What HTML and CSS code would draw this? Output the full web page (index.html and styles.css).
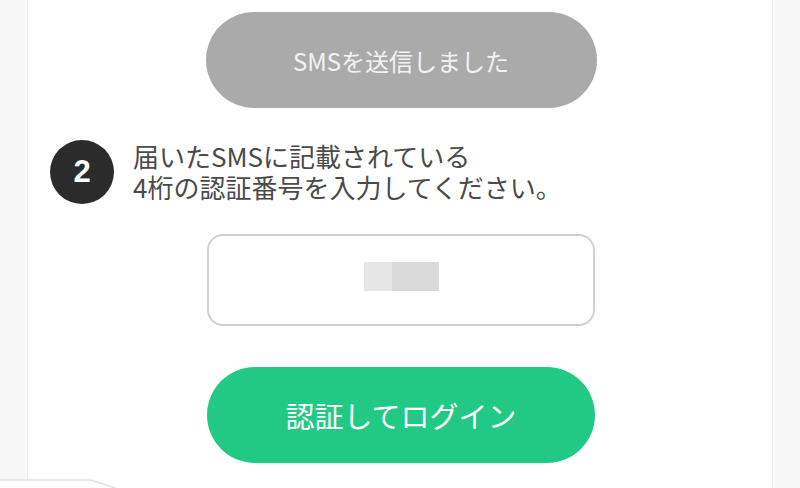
FILE: index.html
```html
<!DOCTYPE html>
<html lang="ja">
<head>
<meta charset="utf-8">
<link rel="stylesheet" href="styles.css">
</head>
<body>
<div class="page">
  <main class="card">
    <button class="btn btn-sent" type="button">SMSを送信しました</button>
    <div class="step">
      <div class="step-num">2</div>
      <p class="step-text">届いたSMSに記載されている<br>4桁の認証番号を入力してください。</p>
    </div>
    <div class="code-input">
      <span class="mask mask-a"></span><span class="mask mask-b"></span>
    </div>
    <button class="btn btn-login" type="button">認証してログイン</button>
  </main>
  <svg class="bubble" width="120" height="10" viewBox="0 0 120 10">
    <polygon points="-2,1 91,1 118,10 -2,10" fill="#ffffff" stroke="#e2e2e2" stroke-width="1.5"/>
  </svg>
</div>
</body>
</html>
```

FILE: styles.css
```css
* { box-sizing: border-box; }
html, body {
  margin: 0;
  padding: 0;
  height: 100%;
  background: #f7f7f7;
  font-family: "Noto Sans CJK JP", "Noto Sans", sans-serif;
}
.page {
  position: relative;
  height: 488px;
  overflow: hidden;
}
.card {
  margin: 0 27px 0 27px;
  height: 488px;
  background: #ffffff;
  border-left: 1px solid #ececec;
  border-right: 1px solid #ececec;
  display: flex;
  flex-direction: column;
  align-items: center;
  padding-top: 12px;
}
.btn {
  border: none;
  border-radius: 48px;
  font-family: inherit;
  color: #ffffff;
  display: flex;
  align-items: center;
  justify-content: center;
  padding: 0;
}
.btn-sent {
  width: 391px;
  height: 96px;
  background: #aaaaaa;
  color: #f2f2f2;
  font-size: 24px;
  margin-left: 2px;
}
.step {
  align-self: stretch;
  display: flex;
  align-items: center;
  gap: 19px;
  padding-left: 22px;
  margin-top: 32px;
}
.step-num {
  width: 64px;
  height: 64px;
  border-radius: 50%;
  background: #2b2b2b;
  color: #ffffff;
  font-family: "Liberation Sans", Arial, sans-serif;
  font-weight: bold;
  font-size: 31px;
  display: flex;
  align-items: center;
  justify-content: center;
  flex: none;
}
.step-text {
  margin: 0;
  padding-bottom: 2px;
  font-size: 26px;
  line-height: 31px;
  color: #4a4a4a;
}
.code-input {
  margin-top: 30px;
  width: 388px;
  height: 92px;
  border: 2px solid #d0d0d0;
  border-radius: 16px;
  display: flex;
  align-items: center;
  justify-content: center;
  padding-bottom: 8px;
  margin-left: 2px;
}
.mask {
  display: block;
  height: 29px;
}
.mask-a { width: 28px; background: #e6e6e6; }
.mask-b { width: 47px; background: #dadada; }
.btn-login {
  margin-top: 41px;
  width: 388px;
  height: 96px;
  background: #21c985;
  font-size: 29px;
  margin-left: 2px;
}
.bubble {
  position: absolute;
  left: 0;
  top: 479px;
}
```
